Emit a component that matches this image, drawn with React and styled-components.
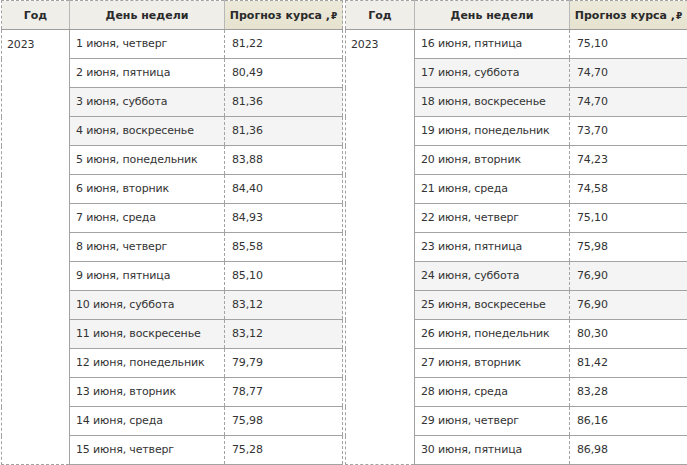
import React from "react";
import styled, { createGlobalStyle } from "styled-components";

const Global = createGlobalStyle`
  html, body { margin: 0; padding: 0; background: #fff; }
  body { font-family: "DejaVu Sans", Verdana, sans-serif; }
`;

const Page = styled.div`
  display: flex;
  gap: 2px;
  width: 687px;
  padding-left: 1px;
`;

const Table = styled.table`
  border-collapse: collapse;
  table-layout: fixed;
  width: ${(p) => p.$w}px;
  border: 1px dashed #a2a2a2;
  font-size: 11px;
  letter-spacing: -0.15px;
  color: #333;
`;

const Th = styled.th`
  height: 28px;
  padding: 0 4px;
  font-size: 11px;
  letter-spacing: 0;
  font-weight: bold;
  color: #2a2a2a;
  text-align: center;
  white-space: nowrap;
  background: ${(p) => (p.$accent ? "linear-gradient(#ece9da, #e6e2cf)" : "#efeee9")};
  border-left: 1px solid #b8b8b8;
  border-right: 1px solid #b8b8b8;
  border-bottom: 1px solid #9d9d9d;
  &:first-child { border-left: none; }
  &:last-child { border-right: none; }
`;

const Rub = styled.span`
  font-size: 9px;
  margin-left: 1px;
`;

const YearCell = styled.td`
  vertical-align: top;
  padding: 8px 5px 0;
  line-height: 14px;
`;

const DayCell = styled.td`
  height: 28px;
  padding: 0 6px;
  line-height: 14px;
  white-space: nowrap;
  background: ${(p) => (p.$weekend ? "#f4f4f4" : "#fff")};
  border-top: 1px solid #a3a3a3;
  border-bottom: 1px solid #a3a3a3;
  border-left: 1px solid #a3a3a3;
  border-right: 1px dashed #a3a3a3;
`;

const ValueCell = styled.td`
  height: 28px;
  padding: 0 7px;
  line-height: 14px;
  background: ${(p) => (p.$weekend ? "#f4f4f4" : "#fff")};
  border-top: 1px solid #a3a3a3;
  border-bottom: 1px solid #a3a3a3;
  border-left: 1px dashed #a3a3a3;
`;

const left = [
  ["1 июня, четверг", "81,22"],
  ["2 июня, пятница", "80,49"],
  ["3 июня, суббота", "81,36"],
  ["4 июня, воскресенье", "81,36"],
  ["5 июня, понедельник", "83,88"],
  ["6 июня, вторник", "84,40"],
  ["7 июня, среда", "84,93"],
  ["8 июня, четверг", "85,58"],
  ["9 июня, пятница", "85,10"],
  ["10 июня, суббота", "83,12"],
  ["11 июня, воскресенье", "83,12"],
  ["12 июня, понедельник", "79,79"],
  ["13 июня, вторник", "78,77"],
  ["14 июня, среда", "75,98"],
  ["15 июня, четверг", "75,28"],
];

const right = [
  ["16 июня, пятница", "75,10"],
  ["17 июня, суббота", "74,70"],
  ["18 июня, воскресенье", "74,70"],
  ["19 июня, понедельник", "73,70"],
  ["20 июня, вторник", "74,23"],
  ["21 июня, среда", "74,58"],
  ["22 июня, четверг", "75,10"],
  ["23 июня, пятница", "75,98"],
  ["24 июня, суббота", "76,90"],
  ["25 июня, воскресенье", "76,90"],
  ["26 июня, понедельник", "80,30"],
  ["27 июня, вторник", "81,42"],
  ["28 июня, среда", "83,28"],
  ["29 июня, четверг", "86,16"],
  ["30 июня, пятница", "86,98"],
];

const isWeekend = (d) => /суббота|воскресенье/.test(d);

function Forecast({ rows, widths }) {
  const total = widths.reduce((a, b) => a + b, 0);
  return (
    <Table $w={total}>
      <colgroup>
        {widths.map((w, i) => (
          <col key={i} style={{ width: w }} />
        ))}
      </colgroup>
      <thead>
        <tr>
          <Th>Год</Th>
          <Th>День недели</Th>
          <Th $accent>
            Прогноз курса ,<Rub>₽</Rub>
          </Th>
        </tr>
      </thead>
      <tbody>
        {rows.map(([day, val], i) => (
          <tr key={day}>
            {i === 0 && <YearCell rowSpan={rows.length}>2023</YearCell>}
            <DayCell $weekend={isWeekend(day)}>{day}</DayCell>
            <ValueCell $weekend={isWeekend(day)}>{val}</ValueCell>
          </tr>
        ))}
      </tbody>
    </Table>
  );
}

export default function App() {
  return (
    <>
      <Global />
      <Page>
        <Forecast rows={left} widths={[68, 155, 118]} />
        <Forecast rows={right} widths={[69, 155, 118]} />
      </Page>
    </>
  );
}
